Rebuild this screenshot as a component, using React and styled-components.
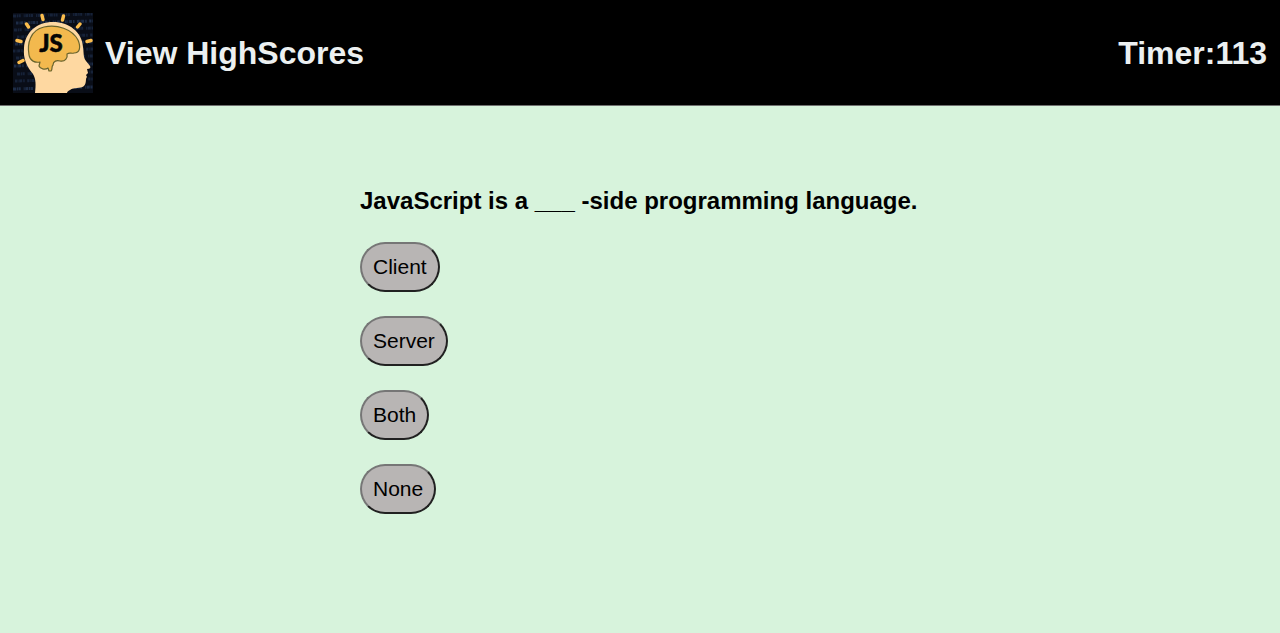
import React from "react";
import styled, { createGlobalStyle } from "styled-components";

const GlobalStyle = createGlobalStyle`
  * {
    box-sizing: border-box;
  }

  body {
    margin: 0;
    background: #d7f3dc;
    color: #000;
    font-family: "Liberation Sans", Arial, sans-serif;
  }
`;

const Header = styled.header`
  display: flex;
  align-items: center;
  justify-content: space-between;
  padding: 13px 13px 12px;
  background: #000;
  border-bottom: 1px solid #6f6f6f;
`;

const Brand = styled.div`
  display: flex;
  align-items: center;
  gap: 12px;
`;

const Logo = styled.svg`
  display: block;
  width: 80px;
  height: 80px;
  flex: none;
`;

const ScoresLink = styled.a`
  color: #ecf0f1;
  font-size: 32px;
  line-height: 36px;
  font-weight: 700;
  text-decoration: none;
`;

const Timer = styled.div`
  color: #ecf0f1;
  font-size: 32px;
  line-height: 36px;
  font-weight: 700;
`;

const Quiz = styled.main`
  max-width: 560px;
  margin: 0 auto;
  padding: 81px 0 48px;
`;

const Question = styled.h1`
  margin: 0 0 27px;
  font-size: 24px;
  line-height: 28px;
  font-weight: 700;
`;

const Choices = styled.ul`
  display: flex;
  flex-direction: column;
  align-items: flex-start;
  gap: 24px;
  margin: 0;
  padding: 0;
  list-style: none;
`;

const Choice = styled.button`
  display: block;
  padding: 11px;
  border: 2px solid;
  border-color: #767676 #212121 #212121 #767676;
  border-radius: 25px;
  background: #b8b5b4;
  color: #000;
  font-family: inherit;
  font-size: 21px;
  line-height: 24px;
  cursor: pointer;
`;

const answers = ["Client", "Server", "Both", "None"];

const codeRows = [3, 10, 17, 24, 31, 38, 45, 53, 61, 68, 76];

function BrainLogo() {
  return (
    <Logo viewBox="0 0 80 80" role="img" aria-label="JavaScript quiz">
      <rect width="80" height="80" fill="#090d17" />
      <g fill="none" strokeWidth="3">
        {codeRows.map((y, i) => (
          <path
            key={y}
            d={`M${(i * 3) % 5} ${y}L80 ${y - 2}`}
            stroke={i % 3 === 1 ? "#1d2c46" : "#162238"}
            strokeDasharray={
              i % 2 ? "2 0.5 1 0.7 3 1 1.5 2.5" : "3 0.7 1.5 0.5 2 3 1 0.6"
            }
          />
        ))}
      </g>
      <path
        d="M22 80C23 72 23 66 20 61C14 54 10 46 11 35C12 19 24 9 40 9C56 9 69 19 70 34C71 40 70 44 73 48L77 53C78 55 77 56 74 56L75 60L73 62L74 64C72 66 74 70 71 73C67 76 61 74 57 77C55 78 54 79 54 80Z"
        fill="#fed8a1"
      />
      <path
        d="M16 42C14 31 17 17 31 14C44 11 59 16 65 27C68 34 67 40 61 40C58 41 57 39 54 41C55 45 52 49 47 48C44 47 40 48 40 52C38 54 40 56 38 58H36L35 55C32 57 27 56 26 53L27 49C22 50 17 48 16 42Z"
        fill="#f3b94e"
        stroke="#69642d"
        strokeWidth="1.2"
        strokeLinejoin="round"
      />
      <path
        d="M13.5 11L15.5 14M29 2.5L30 6.500M50.500 3L49.500 7M67 11L64.500 14M74 28.500L78 27.500M4 27.500L8 28.500M6 49.500L10 47.500"
        fill="none"
        stroke="#fbbd4d"
        strokeWidth="3.4"
        strokeLinecap="round"
      />
      <text
        x="38"
        y="39"
        textAnchor="middle"
        fill="#050505"
        stroke="#050505"
        strokeWidth="0.5"
        fontFamily="Lato, sans-serif"
        fontSize="24"
        fontWeight="900"
      >
        JS
      </text>
    </Logo>
  );
}

export default function App() {
  return (
    <>
      <GlobalStyle />
      <Header>
        <Brand>
          <BrainLogo />
          <ScoresLink href="#scores">View HighScores</ScoresLink>
        </Brand>
        <Timer role="timer">Timer:113</Timer>
      </Header>
      <Quiz>
        <Question>JavaScript is a ___ -side programming language.</Question>
        <Choices>
          {answers.map((answer) => (
            <li key={answer}>
              <Choice type="button">{answer}</Choice>
            </li>
          ))}
        </Choices>
      </Quiz>
    </>
  );
}
